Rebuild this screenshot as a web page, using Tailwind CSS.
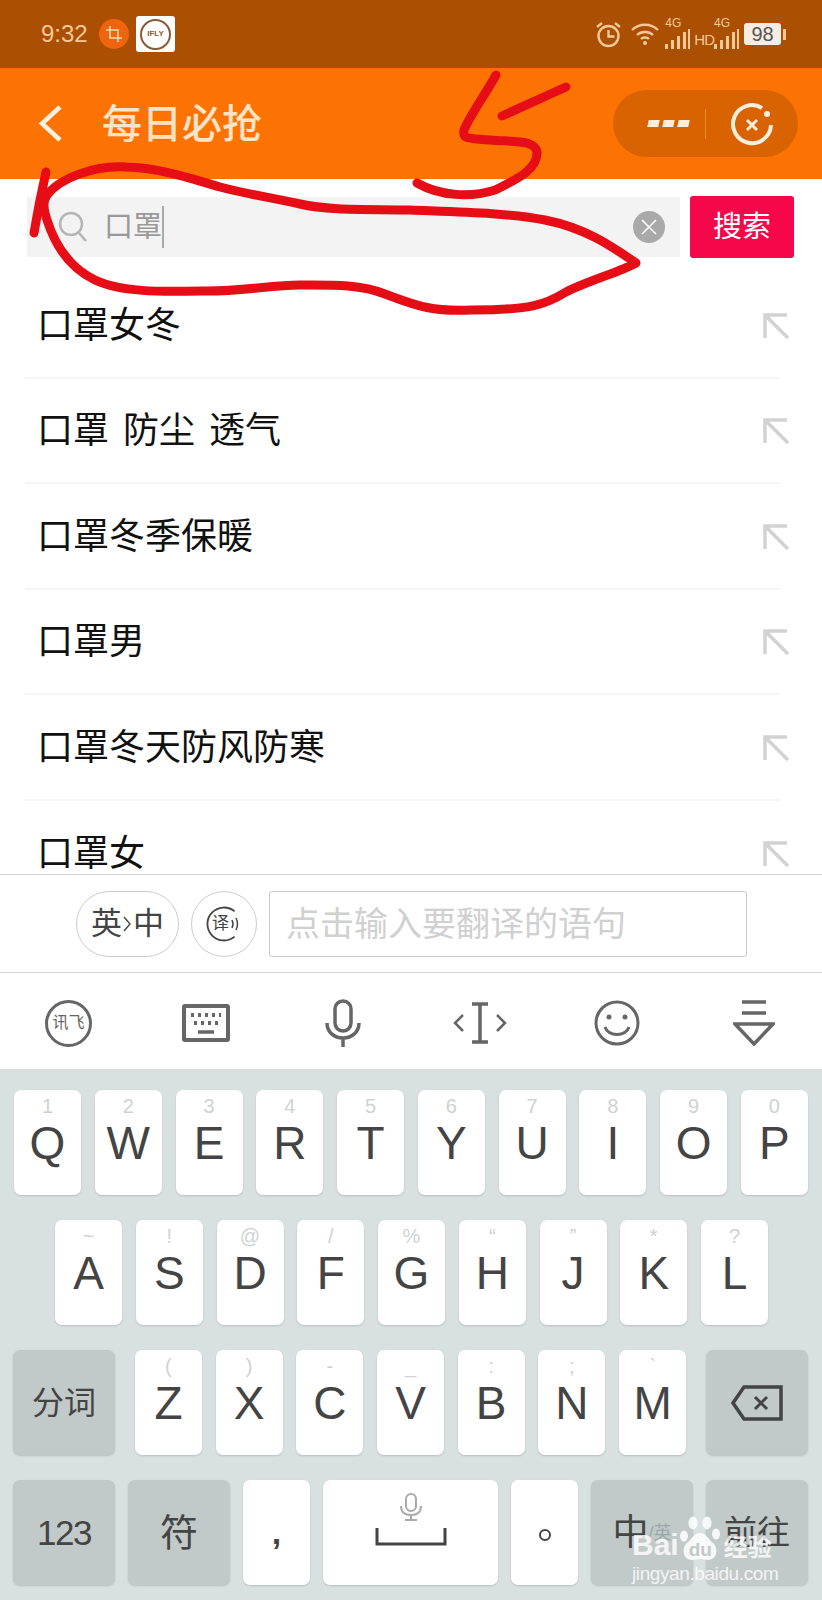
<!DOCTYPE html>
<html lang="zh-CN">
<head>
    <meta charset="UTF-8">
    <meta name="viewport" content="width=device-width, initial-scale=1.0">
    <title>每日必抢</title>
    <script src="https://cdn.jsdelivr.net/npm/@tailwindcss/browser@4"></script>
</head>
<body class="relative w-[822px] h-[1600px] overflow-hidden bg-white font-['Liberation_Sans','Noto_Sans_CJK_SC',sans-serif]">

    <!-- status bar -->
    <div class="h-[68px] bg-[#ab4f03] flex items-center justify-between pl-[41px] pr-[36px] text-[#f5c896]">
        <div class="flex items-center">
            <span class="text-[24px] leading-none w-[58px]">9:32</span>
            <div class="w-[30px] h-[30px] rounded-full bg-[#f0640f] flex items-center justify-center">
                <svg width="16" height="16" viewBox="0 0 16 16" fill="none" stroke="#f9d9a8" stroke-width="1.6"><path d="M4 0v12h12M0 4h12v12"/></svg>
            </div>
            <div class="ml-[7px] w-[39px] h-[36px] rounded-[3px] bg-white flex items-center justify-center">
                <div class="w-[31px] h-[31px] rounded-full border-[2px] border-[#8a5a33] flex items-center justify-center text-[8px] font-bold text-[#8a5a33] bg-white">IFLY</div>
            </div>
        </div>
        <div class="flex items-center">
            <svg width="27" height="27" viewBox="0 0 27 27" fill="none" stroke="#f5c896" stroke-width="2.4"><circle cx="13.5" cy="15" r="10"/><path d="M13.5 9v6.5h6M2 6l5-4M25 6l-5-4"/></svg>
            <svg class="ml-[9px]" width="28" height="24" viewBox="0 0 28 24" fill="none" stroke="#f5c896" stroke-width="2.4"><path d="M1 8c7-7 19-7 26 0M6 13c4-4 12-4 16 0M10 17c2-2 6-2 8 0"/><circle cx="14" cy="21" r="2" fill="#f5c896" stroke="none"/></svg>
            <div class="relative ml-[6px] w-[26px] h-[30px]">
                <span class="absolute left-0 top-[-2px] text-[12px] leading-none">4G</span>
                <svg class="absolute bottom-0 left-0" width="26" height="20" viewBox="0 0 26 20" fill="#f5c896"><rect x="0" y="15" width="3" height="5"/><rect x="6" y="11" width="3" height="9"/><rect x="12" y="7" width="3" height="13"/><rect x="18" y="3" width="3" height="17"/><rect x="23" y="0" width="2" height="20"/></svg>
            </div>
            <span class="ml-[3px] mt-[10px] text-[15px] leading-none tracking-[-1px]">HD</span>
            <div class="relative ml-0 w-[26px] h-[30px]">
                <span class="absolute left-0 top-[-2px] text-[12px] leading-none">4G</span>
                <svg class="absolute bottom-0 left-0" width="26" height="20" viewBox="0 0 26 20" fill="#f5c896"><rect x="0" y="15" width="3" height="5"/><rect x="6" y="11" width="3" height="9"/><rect x="12" y="7" width="3" height="13"/><rect x="18" y="3" width="3" height="17"/><rect x="23" y="0" width="2" height="20"/></svg>
            </div>
            <div class="ml-[4px] w-[37px] h-[22px] rounded-[3px] bg-[#f7ede2] flex items-center justify-center text-[20px] leading-none text-[#555]">98</div>
            <div class="ml-[2px] w-[3px] h-[11px] bg-[#f5c896]"></div>
        </div>
    </div>

    <!-- nav -->
    <div class="h-[111px] bg-[#fd7303] flex items-center justify-between pl-[38px] pr-[24px] text-[#fde3c8]">
        <div class="flex items-center">
            <svg width="25" height="37" viewBox="0 0 25 37" fill="none" stroke="#fdf0e0" stroke-width="4.5"><path d="M22 2L4 18.5L22 35"/></svg>
            <span class="ml-[39px] text-[40px] leading-none font-medium">每日必抢</span>
        </div>
        <div class="w-[185px] h-[67px] rounded-full bg-[#d96300] flex items-center">
            <div class="w-[92px] h-full flex items-center justify-end gap-[4px] pr-[16px]">
                <div class="w-[11px] h-[7px] bg-[#fdeedd] -skew-x-12"></div>
                <div class="w-[11px] h-[7px] bg-[#fdeedd] -skew-x-12"></div>
                <div class="w-[11px] h-[7px] bg-[#fdeedd] -skew-x-12"></div>
            </div>
            <div class="w-px h-[30px] bg-[#e88a3a]"></div>
            <svg class="ml-[24px] mt-[2px]" width="44" height="44" viewBox="0 0 44 44" fill="none" stroke="#fdeedd" stroke-width="4"><path d="M32 5A19 19 0 1 0 41 22"/><circle cx="37" cy="11" r="3" fill="#fdeedd" stroke="none"/><path d="M17 17l10 10M27 17l-10 10" stroke-width="3"/></svg>
        </div>
    </div>

    <!-- search -->
    <div class="h-[94px] pt-[18px] pl-[27px] flex items-start">
        <div class="w-[653px] h-[60px] bg-[#f3f3f3] flex items-center pl-[31px] pr-[15px]">
            <svg width="30" height="32" viewBox="0 0 30 32" fill="none" stroke="#b5b5b5" stroke-width="2.5"><circle cx="13" cy="13" r="11"/><path d="M21 22l7 8"/></svg>
            <span class="ml-[16px] text-[29px] leading-none text-[#999]">口罩</span>
            <div class="w-[2px] h-[42px] bg-[#aaa]"></div>
            <div class="ml-auto w-[32px] h-[32px] rounded-full bg-[#a9a9a9] flex items-center justify-center">
                <svg width="18" height="18" viewBox="0 0 18 18" stroke="#fff" stroke-width="1.6"><path d="M2 2l14 14M16 2L2 16"/></svg>
            </div>
        </div>
        <div class="ml-[10px] w-[104px] h-[62px] -mt-px rounded-[3px] bg-[#f5074a] text-white text-[29px] leading-none flex items-center justify-center">搜索</div>
    </div>

    <!-- suggestions -->
    <div class="h-[601px] overflow-hidden text-[36px] leading-none text-[#111]">
        <div class="ml-[25px] mr-[42px] h-[105.5px] pt-[2px] border-b-2 border-[#f5f5f5] flex items-center justify-between pl-[12px]">
            <span>口罩女冬</span>
            <svg class="-mr-[9px]" width="26" height="26" viewBox="0 0 26 26" fill="none" stroke="#d2d2d2" stroke-width="3.5"><path d="M24 2H2v23M2 2l23 23"/></svg>
        </div>
        <div class="ml-[25px] mr-[42px] h-[105.5px] pt-[2px] border-b-2 border-[#f5f5f5] flex items-center justify-between pl-[12px]">
            <span class="flex gap-[14px]"><span>口罩</span><span>防尘</span><span>透气</span></span>
            <svg class="-mr-[9px]" width="26" height="26" viewBox="0 0 26 26" fill="none" stroke="#d2d2d2" stroke-width="3.5"><path d="M24 2H2v23M2 2l23 23"/></svg>
        </div>
        <div class="ml-[25px] mr-[42px] h-[105.5px] pt-[2px] border-b-2 border-[#f5f5f5] flex items-center justify-between pl-[12px]">
            <span>口罩冬季保暖</span>
            <svg class="-mr-[9px]" width="26" height="26" viewBox="0 0 26 26" fill="none" stroke="#d2d2d2" stroke-width="3.5"><path d="M24 2H2v23M2 2l23 23"/></svg>
        </div>
        <div class="ml-[25px] mr-[42px] h-[105.5px] pt-[2px] border-b-2 border-[#f5f5f5] flex items-center justify-between pl-[12px]">
            <span>口罩男</span>
            <svg class="-mr-[9px]" width="26" height="26" viewBox="0 0 26 26" fill="none" stroke="#d2d2d2" stroke-width="3.5"><path d="M24 2H2v23M2 2l23 23"/></svg>
        </div>
        <div class="ml-[25px] mr-[42px] h-[105.5px] pt-[2px] border-b-2 border-[#f5f5f5] flex items-center justify-between pl-[12px]">
            <span>口罩冬天防风防寒</span>
            <svg class="-mr-[9px]" width="26" height="26" viewBox="0 0 26 26" fill="none" stroke="#d2d2d2" stroke-width="3.5"><path d="M24 2H2v23M2 2l23 23"/></svg>
        </div>
        <div class="ml-[25px] mr-[42px] h-[105.5px] pt-[2px] flex items-center justify-between pl-[12px]">
            <span>口罩女</span>
            <svg class="-mr-[9px]" width="26" height="26" viewBox="0 0 26 26" fill="none" stroke="#d2d2d2" stroke-width="3.5"><path d="M24 2H2v23M2 2l23 23"/></svg>
        </div>
    </div>

    <!-- translate bar -->
    <div class="h-[99px] border-t border-b border-[#d5d5d5] flex items-center pl-[76px]">
        <div class="w-[103px] h-[66px] rounded-full border border-[#ccc] flex items-center justify-center text-[31px] leading-none text-[#444]">英<svg class="mx-[1px]" width="9" height="16" viewBox="0 0 9 16" fill="none" stroke="#444" stroke-width="1.4"><path d="M1 1l6 7-6 7"/></svg>中</div>
        <div class="ml-[12px] w-[66px] h-[66px] rounded-full border border-[#ccc] flex items-center justify-center">
            <div class="relative w-[36px] h-[36px] flex items-center pl-[6px] text-[17px] leading-none text-[#444]">
                <svg class="absolute inset-0" width="36" height="36" viewBox="0 0 36 36" fill="none" stroke="#444" stroke-width="1.8"><path d="M28.6 5.4A16.5 16.5 0 1 0 28.6 30.6"/><path d="M26 14q2 4 0 8M30 12q3 6 0 12" stroke-width="1.5"/></svg>
                <span>译</span>
            </div>
        </div>
        <div class="ml-[12px] w-[478px] h-[66px] rounded-[3px] border border-[#c9c9cf] flex items-center pl-[16px] text-[34px] leading-none text-[#d0d0d0]">点击输入要翻译的语句</div>
    </div>

    <!-- keyboard toolbar -->
    <div class="h-[96px] pt-[4px] grid grid-cols-6 items-center justify-items-center">
        <div class="w-[47px] h-[47px] rounded-full border-[3px] border-[#666] flex items-center justify-center text-[16px] leading-none text-[#666] whitespace-nowrap">讯飞</div>
        <svg width="48" height="38" viewBox="0 0 48 38" fill="none" stroke="#666"><rect x="2" y="2" width="44" height="34" rx="1" stroke-width="4"/><path d="M9 11h30M12 19h24" stroke-width="4" stroke-dasharray="3 4"/><path d="M16 28h16" stroke-width="3.5"/></svg>
        <svg width="36" height="48" viewBox="0 0 36 48" fill="none" stroke="#666" stroke-width="3.5"><rect x="10" y="2" width="16" height="30" rx="8"/><path d="M2 24c0 9 7 15 16 15s16-6 16-15M18 39v9"/></svg>
        <svg width="54" height="42" viewBox="0 0 54 42" fill="none" stroke="#666"><path d="M19 2h16M19 40h16M27 2v38" stroke-width="3.5"/><path d="M10 13L2 21l8 8M44 13l8 8-8 8" stroke-width="2.5"/></svg>
        <svg width="46" height="46" viewBox="0 0 46 46" fill="none" stroke="#666" stroke-width="3"><circle cx="23" cy="23" r="21"/><path d="M11 27c3 10 21 10 24 0"/><circle cx="15" cy="17" r="2.5" fill="#666" stroke="none"/><circle cx="31" cy="17" r="2.5" fill="#666" stroke="none"/></svg>
        <svg width="42" height="46" viewBox="0 0 42 46" fill="none" stroke="#666" stroke-width="3.5"><path d="M9 2h24M9 13h24M2 24h38L21 44z"/></svg>
    </div>

    <!-- keyboard -->
    <div class="h-[531px] bg-[#d9e0e0] pt-[21px] flex flex-col gap-[25px] text-[#444]">
        <div class="pl-[14px] pr-[14px] flex justify-between">
            <div class="w-[67px] h-[105px] rounded-[7px] bg-white shadow-[0_1px_2px_rgba(0,0,0,0.15)] flex flex-col items-center pt-[4px]"><span class="h-[26px] text-[20px] leading-[24px] text-[#ced2d2]">1</span><span class="text-[46px] leading-[46px]">Q</span></div>
            <div class="w-[67px] h-[105px] rounded-[7px] bg-white shadow-[0_1px_2px_rgba(0,0,0,0.15)] flex flex-col items-center pt-[4px]"><span class="h-[26px] text-[20px] leading-[24px] text-[#ced2d2]">2</span><span class="text-[46px] leading-[46px]">W</span></div>
            <div class="w-[67px] h-[105px] rounded-[7px] bg-white shadow-[0_1px_2px_rgba(0,0,0,0.15)] flex flex-col items-center pt-[4px]"><span class="h-[26px] text-[20px] leading-[24px] text-[#ced2d2]">3</span><span class="text-[46px] leading-[46px]">E</span></div>
            <div class="w-[67px] h-[105px] rounded-[7px] bg-white shadow-[0_1px_2px_rgba(0,0,0,0.15)] flex flex-col items-center pt-[4px]"><span class="h-[26px] text-[20px] leading-[24px] text-[#ced2d2]">4</span><span class="text-[46px] leading-[46px]">R</span></div>
            <div class="w-[67px] h-[105px] rounded-[7px] bg-white shadow-[0_1px_2px_rgba(0,0,0,0.15)] flex flex-col items-center pt-[4px]"><span class="h-[26px] text-[20px] leading-[24px] text-[#ced2d2]">5</span><span class="text-[46px] leading-[46px]">T</span></div>
            <div class="w-[67px] h-[105px] rounded-[7px] bg-white shadow-[0_1px_2px_rgba(0,0,0,0.15)] flex flex-col items-center pt-[4px]"><span class="h-[26px] text-[20px] leading-[24px] text-[#ced2d2]">6</span><span class="text-[46px] leading-[46px]">Y</span></div>
            <div class="w-[67px] h-[105px] rounded-[7px] bg-white shadow-[0_1px_2px_rgba(0,0,0,0.15)] flex flex-col items-center pt-[4px]"><span class="h-[26px] text-[20px] leading-[24px] text-[#ced2d2]">7</span><span class="text-[46px] leading-[46px]">U</span></div>
            <div class="w-[67px] h-[105px] rounded-[7px] bg-white shadow-[0_1px_2px_rgba(0,0,0,0.15)] flex flex-col items-center pt-[4px]"><span class="h-[26px] text-[20px] leading-[24px] text-[#ced2d2]">8</span><span class="text-[46px] leading-[46px]">I</span></div>
            <div class="w-[67px] h-[105px] rounded-[7px] bg-white shadow-[0_1px_2px_rgba(0,0,0,0.15)] flex flex-col items-center pt-[4px]"><span class="h-[26px] text-[20px] leading-[24px] text-[#ced2d2]">9</span><span class="text-[46px] leading-[46px]">O</span></div>
            <div class="w-[67px] h-[105px] rounded-[7px] bg-white shadow-[0_1px_2px_rgba(0,0,0,0.15)] flex flex-col items-center pt-[4px]"><span class="h-[26px] text-[20px] leading-[24px] text-[#ced2d2]">0</span><span class="text-[46px] leading-[46px]">P</span></div>
        </div>
        <div class="pl-[55px] pr-[54px] flex justify-between">
            <div class="w-[67px] h-[105px] rounded-[7px] bg-white shadow-[0_1px_2px_rgba(0,0,0,0.15)] flex flex-col items-center pt-[4px]"><span class="h-[26px] text-[20px] leading-[24px] text-[#ced2d2]">~</span><span class="text-[46px] leading-[46px]">A</span></div>
            <div class="w-[67px] h-[105px] rounded-[7px] bg-white shadow-[0_1px_2px_rgba(0,0,0,0.15)] flex flex-col items-center pt-[4px]"><span class="h-[26px] text-[20px] leading-[24px] text-[#ced2d2]">!</span><span class="text-[46px] leading-[46px]">S</span></div>
            <div class="w-[67px] h-[105px] rounded-[7px] bg-white shadow-[0_1px_2px_rgba(0,0,0,0.15)] flex flex-col items-center pt-[4px]"><span class="h-[26px] text-[20px] leading-[24px] text-[#ced2d2]">@</span><span class="text-[46px] leading-[46px]">D</span></div>
            <div class="w-[67px] h-[105px] rounded-[7px] bg-white shadow-[0_1px_2px_rgba(0,0,0,0.15)] flex flex-col items-center pt-[4px]"><span class="h-[26px] text-[20px] leading-[24px] text-[#ced2d2]">/</span><span class="text-[46px] leading-[46px]">F</span></div>
            <div class="w-[67px] h-[105px] rounded-[7px] bg-white shadow-[0_1px_2px_rgba(0,0,0,0.15)] flex flex-col items-center pt-[4px]"><span class="h-[26px] text-[20px] leading-[24px] text-[#ced2d2]">%</span><span class="text-[46px] leading-[46px]">G</span></div>
            <div class="w-[67px] h-[105px] rounded-[7px] bg-white shadow-[0_1px_2px_rgba(0,0,0,0.15)] flex flex-col items-center pt-[4px]"><span class="h-[26px] text-[20px] leading-[24px] text-[#ced2d2]">“</span><span class="text-[46px] leading-[46px]">H</span></div>
            <div class="w-[67px] h-[105px] rounded-[7px] bg-white shadow-[0_1px_2px_rgba(0,0,0,0.15)] flex flex-col items-center pt-[4px]"><span class="h-[26px] text-[20px] leading-[24px] text-[#ced2d2]">”</span><span class="text-[46px] leading-[46px]">J</span></div>
            <div class="w-[67px] h-[105px] rounded-[7px] bg-white shadow-[0_1px_2px_rgba(0,0,0,0.15)] flex flex-col items-center pt-[4px]"><span class="h-[26px] text-[20px] leading-[24px] text-[#ced2d2]">*</span><span class="text-[46px] leading-[46px]">K</span></div>
            <div class="w-[67px] h-[105px] rounded-[7px] bg-white shadow-[0_1px_2px_rgba(0,0,0,0.15)] flex flex-col items-center pt-[4px]"><span class="h-[26px] text-[20px] leading-[24px] text-[#ced2d2]">?</span><span class="text-[46px] leading-[46px]">L</span></div>
        </div>
        <div class="pl-[13px] pr-[14px] flex justify-between">
            <div class="w-[102px] h-[105px] rounded-[7px] bg-[#c1c9c9] shadow-[0_1px_2px_rgba(0,0,0,0.15)] flex items-center justify-center text-[32px] leading-none">分词</div>
            <div class="flex gap-[13.7px]">
                <div class="w-[67px] h-[105px] rounded-[7px] bg-white shadow-[0_1px_2px_rgba(0,0,0,0.15)] flex flex-col items-center pt-[4px]"><span class="h-[26px] text-[20px] leading-[24px] text-[#ced2d2]">(</span><span class="text-[46px] leading-[46px]">Z</span></div>
                <div class="w-[67px] h-[105px] rounded-[7px] bg-white shadow-[0_1px_2px_rgba(0,0,0,0.15)] flex flex-col items-center pt-[4px]"><span class="h-[26px] text-[20px] leading-[24px] text-[#ced2d2]">)</span><span class="text-[46px] leading-[46px]">X</span></div>
                <div class="w-[67px] h-[105px] rounded-[7px] bg-white shadow-[0_1px_2px_rgba(0,0,0,0.15)] flex flex-col items-center pt-[4px]"><span class="h-[26px] text-[20px] leading-[24px] text-[#ced2d2]">-</span><span class="text-[46px] leading-[46px]">C</span></div>
                <div class="w-[67px] h-[105px] rounded-[7px] bg-white shadow-[0_1px_2px_rgba(0,0,0,0.15)] flex flex-col items-center pt-[4px]"><span class="h-[26px] text-[20px] leading-[24px] text-[#ced2d2]">_</span><span class="text-[46px] leading-[46px]">V</span></div>
                <div class="w-[67px] h-[105px] rounded-[7px] bg-white shadow-[0_1px_2px_rgba(0,0,0,0.15)] flex flex-col items-center pt-[4px]"><span class="h-[26px] text-[20px] leading-[24px] text-[#ced2d2]">:</span><span class="text-[46px] leading-[46px]">B</span></div>
                <div class="w-[67px] h-[105px] rounded-[7px] bg-white shadow-[0_1px_2px_rgba(0,0,0,0.15)] flex flex-col items-center pt-[4px]"><span class="h-[26px] text-[20px] leading-[24px] text-[#ced2d2]">;</span><span class="text-[46px] leading-[46px]">N</span></div>
                <div class="w-[67px] h-[105px] rounded-[7px] bg-white shadow-[0_1px_2px_rgba(0,0,0,0.15)] flex flex-col items-center pt-[4px]"><span class="h-[26px] text-[20px] leading-[24px] text-[#ced2d2]">`</span><span class="text-[46px] leading-[46px]">M</span></div>
            </div>
            <div class="w-[102px] h-[105px] rounded-[7px] bg-[#c1c9c9] shadow-[0_1px_2px_rgba(0,0,0,0.15)] flex items-center justify-center">
                <svg width="52" height="36" viewBox="0 0 52 36" fill="none" stroke="#444" stroke-width="3.5"><path d="M13 2h37v32H13L2 18z"/><path d="M24 12l12 12M36 12L24 24" stroke-width="3"/></svg>
            </div>
        </div>
        <div class="pl-[13px] flex gap-[13px]">
            <div class="w-[102px] h-[105px] rounded-[7px] bg-[#c1c9c9] shadow-[0_1px_2px_rgba(0,0,0,0.15)] flex items-center justify-center text-[35px] leading-none tracking-[-1.5px]">123</div>
            <div class="w-[102px] h-[105px] rounded-[7px] bg-[#c1c9c9] shadow-[0_1px_2px_rgba(0,0,0,0.15)] flex items-center justify-center text-[38px] leading-none">符</div>
            <div class="w-[67px] h-[105px] rounded-[7px] bg-white shadow-[0_1px_2px_rgba(0,0,0,0.15)] flex items-center justify-center text-[34px] font-bold leading-none pb-[2px]">,</div>
            <div class="w-[175px] h-[105px] rounded-[7px] bg-white shadow-[0_1px_2px_rgba(0,0,0,0.15)] flex flex-col items-center pt-[13px]">
                <svg width="24" height="28" viewBox="0 0 24 28" fill="none" stroke="#aaa" stroke-width="2"><rect x="7" y="1" width="10" height="17" rx="5"/><path d="M2 13c0 6 4 9 10 9s10-3 10-9M12 22v5M6 27h12"/></svg>
                <svg class="mt-[6px]" width="72" height="20" viewBox="0 0 72 20" fill="none" stroke="#444" stroke-width="3"><path d="M2 1v16h68V1"/></svg>
            </div>
            <div class="w-[67px] h-[105px] rounded-[7px] bg-white shadow-[0_1px_2px_rgba(0,0,0,0.15)] flex items-center justify-center">
                <div class="w-[12px] h-[12px] rounded-full border-[2px] border-[#444] mt-[4px]"></div>
            </div>
            <div class="w-[102px] h-[105px] rounded-[7px] bg-[#c1c9c9] shadow-[0_1px_2px_rgba(0,0,0,0.15)] flex items-center justify-center text-[36px] leading-none">中<span class="text-[18px] text-[#9aa]">/英</span></div>
            <div class="w-[102px] h-[105px] rounded-[7px] bg-[#c1c9c9] shadow-[0_1px_2px_rgba(0,0,0,0.15)] flex items-center justify-center text-[33px] leading-none">前往</div>
        </div>
    </div>

    <!-- baidu watermark -->
    <div class="absolute left-[632px] top-[1512px] w-[150px] text-white/80">
        <div class="flex items-end h-[48px]">
            <span class="text-[30px] leading-none font-bold">Bai</span>
            <div class="relative w-[42px] h-[46px] -mb-[2px]">
                <svg class="absolute inset-0" width="42" height="46" viewBox="0 0 42 46" fill="#fff" fill-opacity="0.85"><ellipse cx="5" cy="20" rx="4" ry="5.5"/><ellipse cx="14" cy="7" rx="4.5" ry="6.5"/><ellipse cx="28" cy="7" rx="4.5" ry="6.5"/><ellipse cx="37" cy="18" rx="4" ry="5.5"/><path d="M21 17c-6 0-8 6-13 10-6 5-4 17 5 17 3 0 5-1 8-1s5 1 8 1c9 0 11-12 5-17-5-4-7-10-13-10z"/></svg>
                <span class="absolute left-[10px] top-[24px] text-[19px] leading-none font-bold text-[#c1c9c9]">du</span>
            </div>
            <span class="ml-[3px] text-[24px] leading-none font-bold">经验</span>
        </div>
        <div class="mt-[4px] text-[19px] leading-none tracking-[-0.4px] whitespace-nowrap">jingyan.baidu.com</div>
    </div>

    <!-- red pen scribble over the screenshot -->
    <svg class="absolute inset-0 pointer-events-none" width="822" height="1600" viewBox="0 0 822 1600" fill="none" stroke="#e60d17" stroke-width="9" stroke-linecap="round" stroke-linejoin="round">
        <path d="M46 172L39 205L34 233"/>
        <path d="M47 195C60 178 95 165 126 167C160 168 190 178 220 187C250 195 275 198 300 204C330 211 370 209 410 210C460 212 510 213 545 220C585 228 610 245 636 263C620 272 590 280 566 292C545 305 530 310 472 310C430 312 415 305 385 294C360 284 330 285 300 285C270 285 240 292 200 291C160 292 120 292 95 280C70 268 55 245 47 220C42 205 44 200 47 195Z"/>
        <path d="M496 75C485 95 470 115 464 130C462 140 470 138 490 140C515 142 535 140 537 152C538 170 515 180 495 190C470 198 440 196 417 183"/>
        <path d="M566 87L502 116"/>
    </svg>
</body>
</html>
